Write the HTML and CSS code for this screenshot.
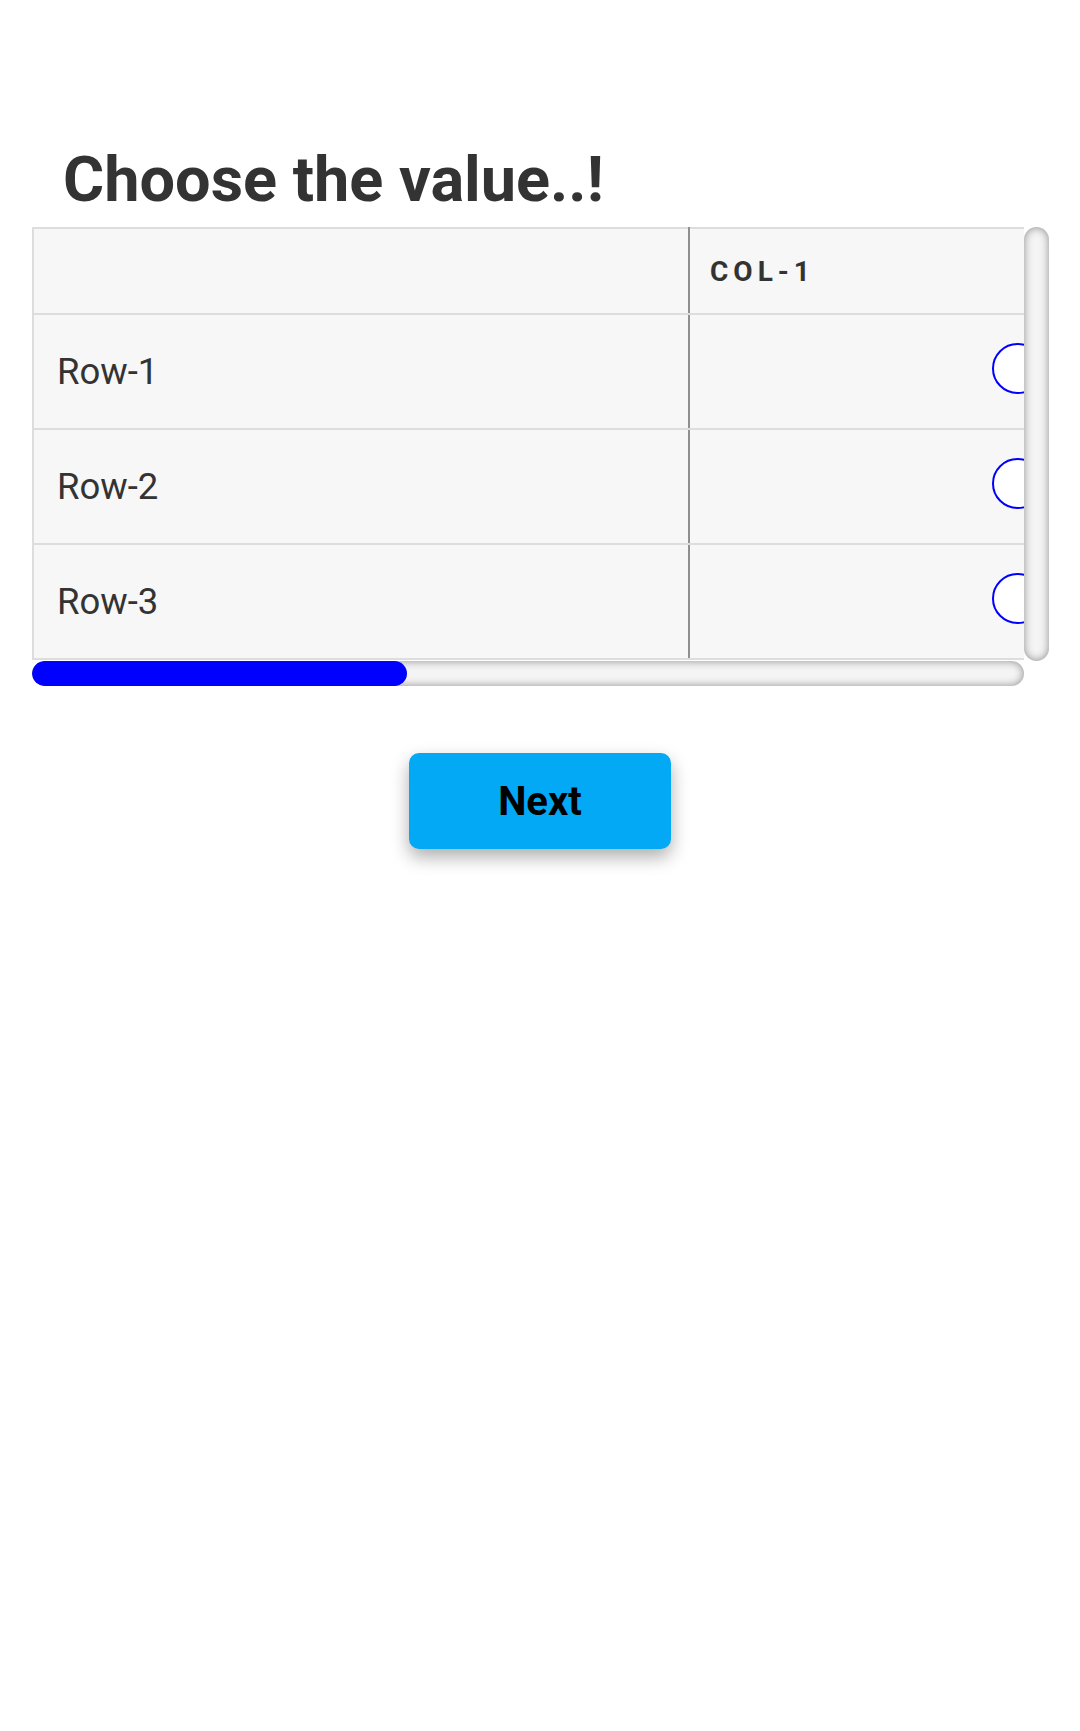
FILE: index.html
```html
<!DOCTYPE html>
<html lang="en">
<head>
<meta charset="utf-8">
<title>Choose the value</title>
<link rel="stylesheet" href="styles.css">
</head>
<body>
<main class="page">
  <h1 class="title">Choose the value..!</h1>
  <div class="scroll-frame">
    <div class="viewport">
      <table class="matrix">
        <thead>
          <tr>
            <th class="label-col"></th>
            <th class="col-head">COL-1</th>
          </tr>
        </thead>
        <tbody>
          <tr>
            <td class="label-col">Row-1</td>
            <td class="choice"><input class="radio" type="radio" name="r1"></td>
          </tr>
          <tr>
            <td class="label-col">Row-2</td>
            <td class="choice"><input class="radio" type="radio" name="r2"></td>
          </tr>
          <tr>
            <td class="label-col">Row-3</td>
            <td class="choice"><input class="radio" type="radio" name="r3"></td>
          </tr>
        </tbody>
      </table>
    </div>
    <div class="vtrack"></div>
    <div class="htrack"><div class="hthumb"></div></div>
    <div class="corner"></div>
  </div>
  <div class="actions">
    <button class="next-btn" type="button">Next</button>
  </div>
</main>
</body>
</html>
```
FILE: styles.css
```css
html, body {
  margin: 0;
  padding: 0;
  background: #ffffff;
}

body {
  font-family: Roboto, "Liberation Sans", Arial, sans-serif;
  color: #333333;
}

.page {
  padding: 0 31px 60px 32px;
}

.title {
  margin: 0 0 10px 31px;
  padding-top: 142px;
  font-size: 63px;
  font-weight: 700;
  line-height: 75px;
  color: #333333;
}

.scroll-frame {
  display: grid;
  grid-template-columns: 992px 25px;
  grid-template-rows: 434px 25px;
  width: 1017px;
}

.viewport {
  overflow: hidden;
  background: #ffffff;
}

.vtrack,
.htrack {
  background: #f4f4f4;
  box-shadow: inset 0 0 8px #8c8c8c;
  border-radius: 13px;
}

.htrack {
  overflow: hidden;
}

.hthumb {
  width: 375px;
  height: 100%;
  background: #0000ff;
  border-radius: 13px;
}

.matrix {
  border-collapse: collapse;
  table-layout: fixed;
  width: 1312px;
  background: #f7f7f7;
  border: 2px solid #dddddd;
}

.matrix th,
.matrix td {
  box-sizing: border-box;
  width: 656px;
  padding: 0;
  border-top: 2px solid #dddddd;
  border-bottom: 2px solid #dddddd;
  border-left: 2px solid #8f8f8f;
  border-right: 2px solid #8f8f8f;
}

.matrix .label-col {
  border-left: 2px solid #dddddd;
}

.matrix th {
  height: 86px;
  text-align: left;
  font-size: 28px;
  font-weight: 700;
  letter-spacing: 5px;
  color: #333333;
}

.matrix th.col-head {
  padding-left: 20px;
}

.matrix td {
  height: 115px;
  font-size: 36.5px;
  color: #333333;
}

.matrix td.label-col {
  padding-left: 23px;
}

.radio {
  appearance: none;
  -webkit-appearance: none;
  display: block;
  box-sizing: border-box;
  width: 51px;
  height: 51px;
  margin: 0 auto 6px;
  border: 2px solid #0000ff;
  border-radius: 50%;
  background: #ffffff;
}

.actions {
  display: flex;
  justify-content: center;
  margin: 67px -31px 0 -32px;
  padding-bottom: 30px;
}

.next-btn {
  width: 262px;
  height: 96px;
  border: none;
  border-radius: 10px;
  background: #03a9f4;
  color: #000000;
  font-family: Roboto, "Liberation Sans", Arial, sans-serif;
  font-size: 40px;
  font-weight: 700;
  box-shadow: 0 8px 18px rgba(0, 0, 0, 0.32);
}
```
